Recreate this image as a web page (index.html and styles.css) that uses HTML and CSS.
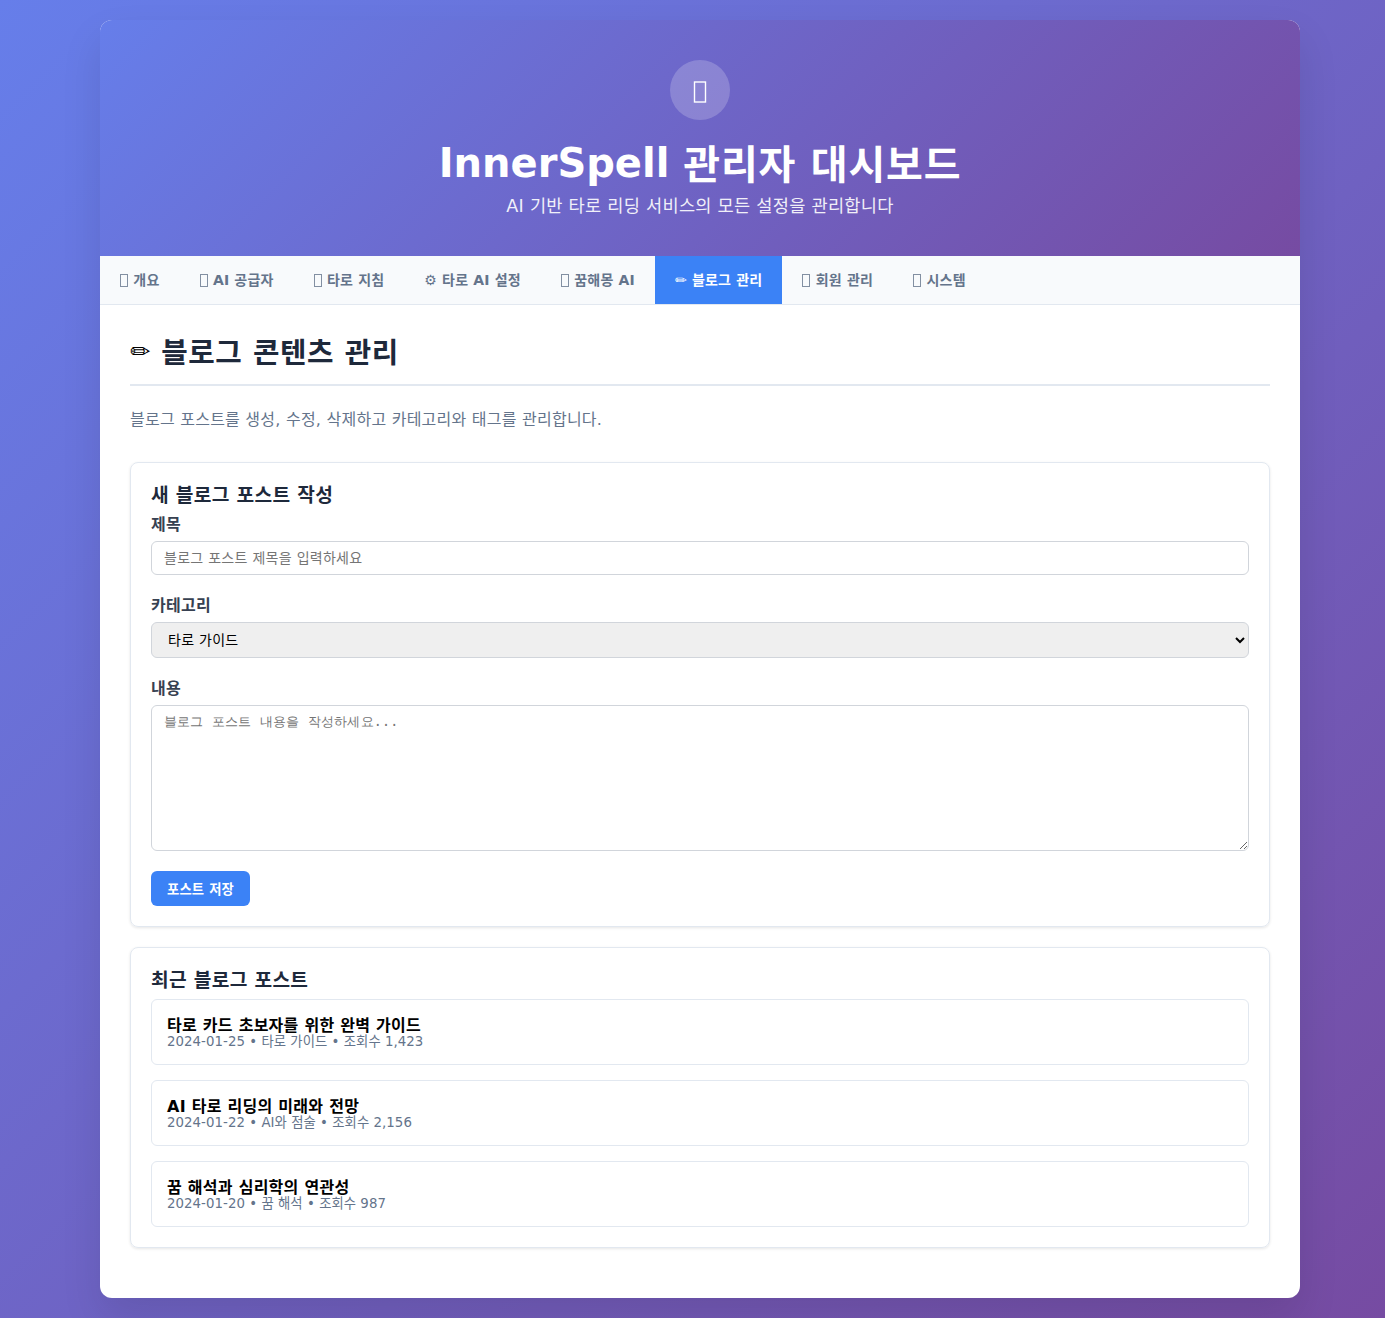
FILE: index.html
```html
<!DOCTYPE html>
<html lang="ko">
<head>
<meta charset="UTF-8">
<title>InnerSpell 관리자 대시보드</title>
<link rel="stylesheet" href="styles.css">
</head>
<body>
<div class="container">
  <header class="header">
    <div class="logo"><svg class="tofu-large" viewBox="0 0 14 22" aria-hidden="true"><rect x="1.5" y="1" width="11" height="20"/></svg></div>
    <h1>InnerSpell <span class="korean">관리자 대시보드</span></h1>
    <p>AI 기반 타로 리딩 서비스의 모든 설정을 관리합니다</p>
  </header>
  <nav class="nav">
    <button class="tab"><i class="tofu"></i> 개요</button>
    <button class="tab"><i class="tofu"></i> AI 공급자</button>
    <button class="tab"><i class="tofu"></i> 타로 지침</button>
    <button class="tab">⚙ 타로 AI 설정</button>
    <button class="tab"><i class="tofu"></i> 꿈해몽 AI</button>
    <button class="tab active">✏ 블로그 관리</button>
    <button class="tab"><i class="tofu"></i> 회원 관리</button>
    <button class="tab"><i class="tofu"></i> 시스템</button>
  </nav>
  <main class="content">
    <h2><span class="pencil">✏</span> 블로그 콘텐츠 관리</h2>
    <p class="description">블로그 포스트를 생성, 수정, 삭제하고 카테고리와 태그를 관리합니다.</p>
    <section class="card">
      <h3>새 블로그 포스트 작성</h3>
      <div class="form-group">
        <label for="title">제목</label>
        <input id="title" class="input" type="text" placeholder="블로그 포스트 제목을 입력하세요">
      </div>
      <div class="form-group">
        <label for="category">카테고리</label>
        <select id="category" class="input"><option>타로 가이드</option></select>
      </div>
      <div class="form-group">
        <label for="body">내용</label>
        <textarea id="body" class="input textarea" placeholder="블로그 포스트 내용을 작성하세요..."></textarea>
      </div>
      <button class="btn">포스트 저장</button>
    </section>
    <section class="card">
      <h3>최근 블로그 포스트</h3>
      <article class="post"><strong>타로 카드 초보자를 위한 완벽 가이드</strong><p>2024-01-25 • 타로 가이드 • 조회수 1,423</p></article>
      <article class="post"><strong>AI 타로 리딩의 미래와 전망</strong><p>2024-01-22 • AI와 점술 • 조회수 2,156</p></article>
      <article class="post"><strong>꿈 해석과 심리학의 연관성</strong><p>2024-01-20 • 꿈 해석 • 조회수 987</p></article>
    </section>
  </main>
</div>
</body>
</html>
```
FILE: styles.css
```css
* { margin: 0; padding: 0; box-sizing: border-box; }
body {
  font-family: "DejaVu Sans", "Noto Sans CJK KR", sans-serif;
  background: linear-gradient(135deg, #667eea 0%, #764ba2 100%);
  min-height: 100vh;
  padding: 20px 85px 20px 100px;
}
.container {
  width: 1200px;
  height: 1278px;
  background: #fff;
  border-radius: 12px;
  box-shadow: 0 20px 40px rgba(0, 0, 0, .1);
  overflow: hidden;
}
.header {
  height: 236px;
  padding: 40px;
  text-align: center;
  color: #fff;
  background: linear-gradient(135deg, #667eea 0%, #764ba2 100%);
}
.logo {
  width: 60px;
  height: 60px;
  margin: 0 auto 20px;
  padding-top: 3px;
  border-radius: 50%;
  background: rgba(255, 255, 255, .2);
  display: flex;
  align-items: center;
  justify-content: center;
}
.tofu-large { width: 14px; height: 22px; fill: none; stroke: #fff; stroke-width: 1.4; }
h1 { height: 47px; font-size: 40px; line-height: 47px; margin-bottom: 9px; }
.korean { letter-spacing: .8px; line-height: 1; vertical-align: -2px; }
.header p { font-size: 17.6px; line-height: 21px; letter-spacing: .25px; opacity: .9; }
.nav { display: flex; height: 49px; background: #f8fafc; border-bottom: 1px solid #e2e8f0; }
.tab {
  padding: 0 20px 2px;
  border: none;
  background: none;
  font: 600 14px "DejaVu Sans", "Noto Sans CJK KR", sans-serif;
  letter-spacing: .19px;
  color: #64748b;
  white-space: nowrap;
}
.tab.active { background: #3b82f6; color: #fff; }
.tofu { display: inline-block; width: 8px; height: 13px; margin: 0 .3px -2px 0; border: 1px solid currentColor; opacity: .8; }
.content { padding: 30px; }
h2 {
  height: 51px;
  margin-bottom: 20px;
  border-bottom: 2px solid #e2e8f0;
  font-size: 28.8px;
  line-height: 36px;
  letter-spacing: .55px;
  color: #1e293b;
}
.pencil { font-size: 24px; font-weight: 400; line-height: 1; vertical-align: 3px; color: #000; }
.description { height: 56px; font-size: 16px; line-height: 27px; letter-spacing: .24px; color: #64748b; }
.card {
  padding: 20px;
  margin-bottom: 20px;
  border: 1px solid #e2e8f0;
  border-radius: 8px;
  box-shadow: 0 1px 3px rgba(0, 0, 0, .1);
}
h3 { font-size: 19.2px; line-height: 25px; margin-bottom: 6px; letter-spacing: .27px; color: #1e293b; }
.form-group { margin-bottom: 20px; }
label { display: block; height: 19px; margin-bottom: 8px; font-size: 16px; line-height: 21px; font-weight: 600; letter-spacing: .25px; color: #374151; }
.input {
  display: block;
  width: 100%;
  height: 34px;
  padding: 8px 12px;
  border: 1px solid #d1d5db;
  border-radius: 6px;
  font-size: 14px;
  font-family: "DejaVu Sans", "Noto Sans CJK KR", sans-serif;
  letter-spacing: .28px;
}
select.input { height: 36px; }
.textarea { height: 146px; padding-top: 7px; font-family: monospace; font-size: 13.333px; letter-spacing: .22px; resize: vertical; }
.btn {
  display: block;
  width: 99px;
  height: 35px;
  padding-bottom: 1px;
  border: none;
  border-radius: 6px;
  background: #3b82f6;
  color: #fff;
  font: 600 13.333px "DejaVu Sans", "Noto Sans CJK KR", sans-serif;
  letter-spacing: .2px;
}
.post { height: 66px; padding: 15px; border: 1px solid #e2e8f0; border-radius: 6px; }
.post + .post { margin-top: 15px; }
.post strong { display: block; height: 19px; font-size: 16px; line-height: 21px; letter-spacing: .27px; }
.post p { font-size: 13.333px; line-height: 15px; letter-spacing: .05px; color: #64748b; }
```
